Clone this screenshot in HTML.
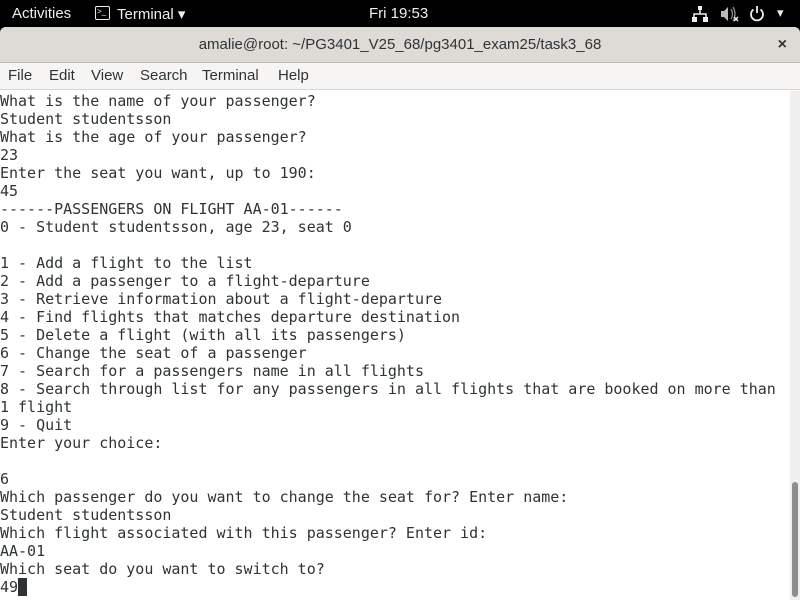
<!DOCTYPE html>
<html><head><style>
*{margin:0;padding:0;box-sizing:border-box}
body{width:800px;height:600px;overflow:hidden;background:#000;font-family:"Liberation Sans",sans-serif;position:relative}
#top{position:absolute;left:0;top:0;width:800px;height:27px;background:#000;color:#eee;font-size:15px}
#top span{position:absolute;top:5px}
#win{position:absolute;left:0;top:27px;width:800px;height:573px;background:#fff;border-radius:6px 6px 0 0;overflow:hidden}
#title{height:36px;background:#dedbd7;border-bottom:1px solid #bfbab4;text-align:center;font-size:15px;color:#2e3436;line-height:36px;position:relative}
#menu{height:27px;background:#f6f5f4;border-bottom:1px solid #d8d4d0;font-size:15px;color:#2e3436;line-height:26px;padding-left:8px;position:relative}
#menu span{position:absolute;top:0}
#term{position:absolute;left:0;top:65px;width:790px;font-family:"DejaVu Sans Mono",monospace;font-size:15px;line-height:18px;color:#2e3436;white-space:pre;letter-spacing:-0.01px}
#sb{position:absolute;right:0;top:64px;width:10px;bottom:0;background:#f0efee}
#thumb{position:absolute;left:2px;width:6px;top:391px;height:115px;background:#8b8e8f;border-radius:3px}
.cur{background:#2e3436;color:#fff}
</style></head><body>
<div id="top">
<span style="left:12px">Activities</span>
<span style="left:95px;top:6px;width:15px;height:14px;border:1.5px solid #eee;border-radius:2px;font-size:8px;line-height:10px;padding-left:1px">&gt;_</span>
<span style="left:117px">Terminal ▾</span>
<span style="left:369px">Fri 19:53</span>
<svg style="position:absolute;left:692px;top:6px" width="16" height="16"><rect x="6" y="0" width="4" height="4" fill="#eee"/><rect x="0" y="11" width="5" height="5" fill="#eee"/><rect x="11" y="11" width="5" height="5" fill="#eee"/><path d="M8 4V8M2 11V8H14V11" stroke="#eee" stroke-width="1.5" fill="none"/></svg>
<svg style="position:absolute;left:721px;top:6px" width="18" height="16"><path d="M0 5H3L7 1V15L3 11H0Z" fill="#bbb"/><path d="M10 3Q13 8 10 13M12 1Q16 8 12 15" stroke="#888" stroke-width="1.3" fill="none"/><path d="M13 11L17 15M17 11L13 15" stroke="#eee" stroke-width="1.5"/></svg>
<svg style="position:absolute;left:749px;top:5px" width="16" height="17"><path d="M4.5 4.5A6 6 0 1 0 11.5 4.5" stroke="#eee" stroke-width="1.8" fill="none"/><path d="M8 1V8" stroke="#eee" stroke-width="1.8"/></svg>
<span style="left:777px;top:5px;font-size:13px">▾</span>
</div>
<div id="win">
<div id="title">amalie@root: ~/PG3401_V25_68/pg3401_exam25/task3_68<span style="position:absolute;right:13px;top:0;font-weight:bold;font-size:16px">×</span></div>
<div id="menu"><span style="left:8px">File</span><span style="left:49px">Edit</span><span style="left:91px">View</span><span style="left:140px">Search</span><span style="left:202px">Terminal</span><span style="left:278px">Help</span></div>
<div id="term">What is the name of your passenger?
Student studentsson
What is the age of your passenger?
23
Enter the seat you want, up to 190:
45
------PASSENGERS ON FLIGHT AA-01------
0 - Student studentsson, age 23, seat 0

1 - Add a flight to the list
2 - Add a passenger to a flight-departure
3 - Retrieve information about a flight-departure
4 - Find flights that matches departure destination
5 - Delete a flight (with all its passengers)
6 - Change the seat of a passenger
7 - Search for a passengers name in all flights
8 - Search through list for any passengers in all flights that are booked on more than
1 flight
9 - Quit
Enter your choice:

6
Which passenger do you want to change the seat for? Enter name:
Student studentsson
Which flight associated with this passenger? Enter id:
AA-01
Which seat do you want to switch to?
49<span class="cur"> </span></div>
<div id="sb"><div id="thumb"></div></div>
</div>
</body></html>
